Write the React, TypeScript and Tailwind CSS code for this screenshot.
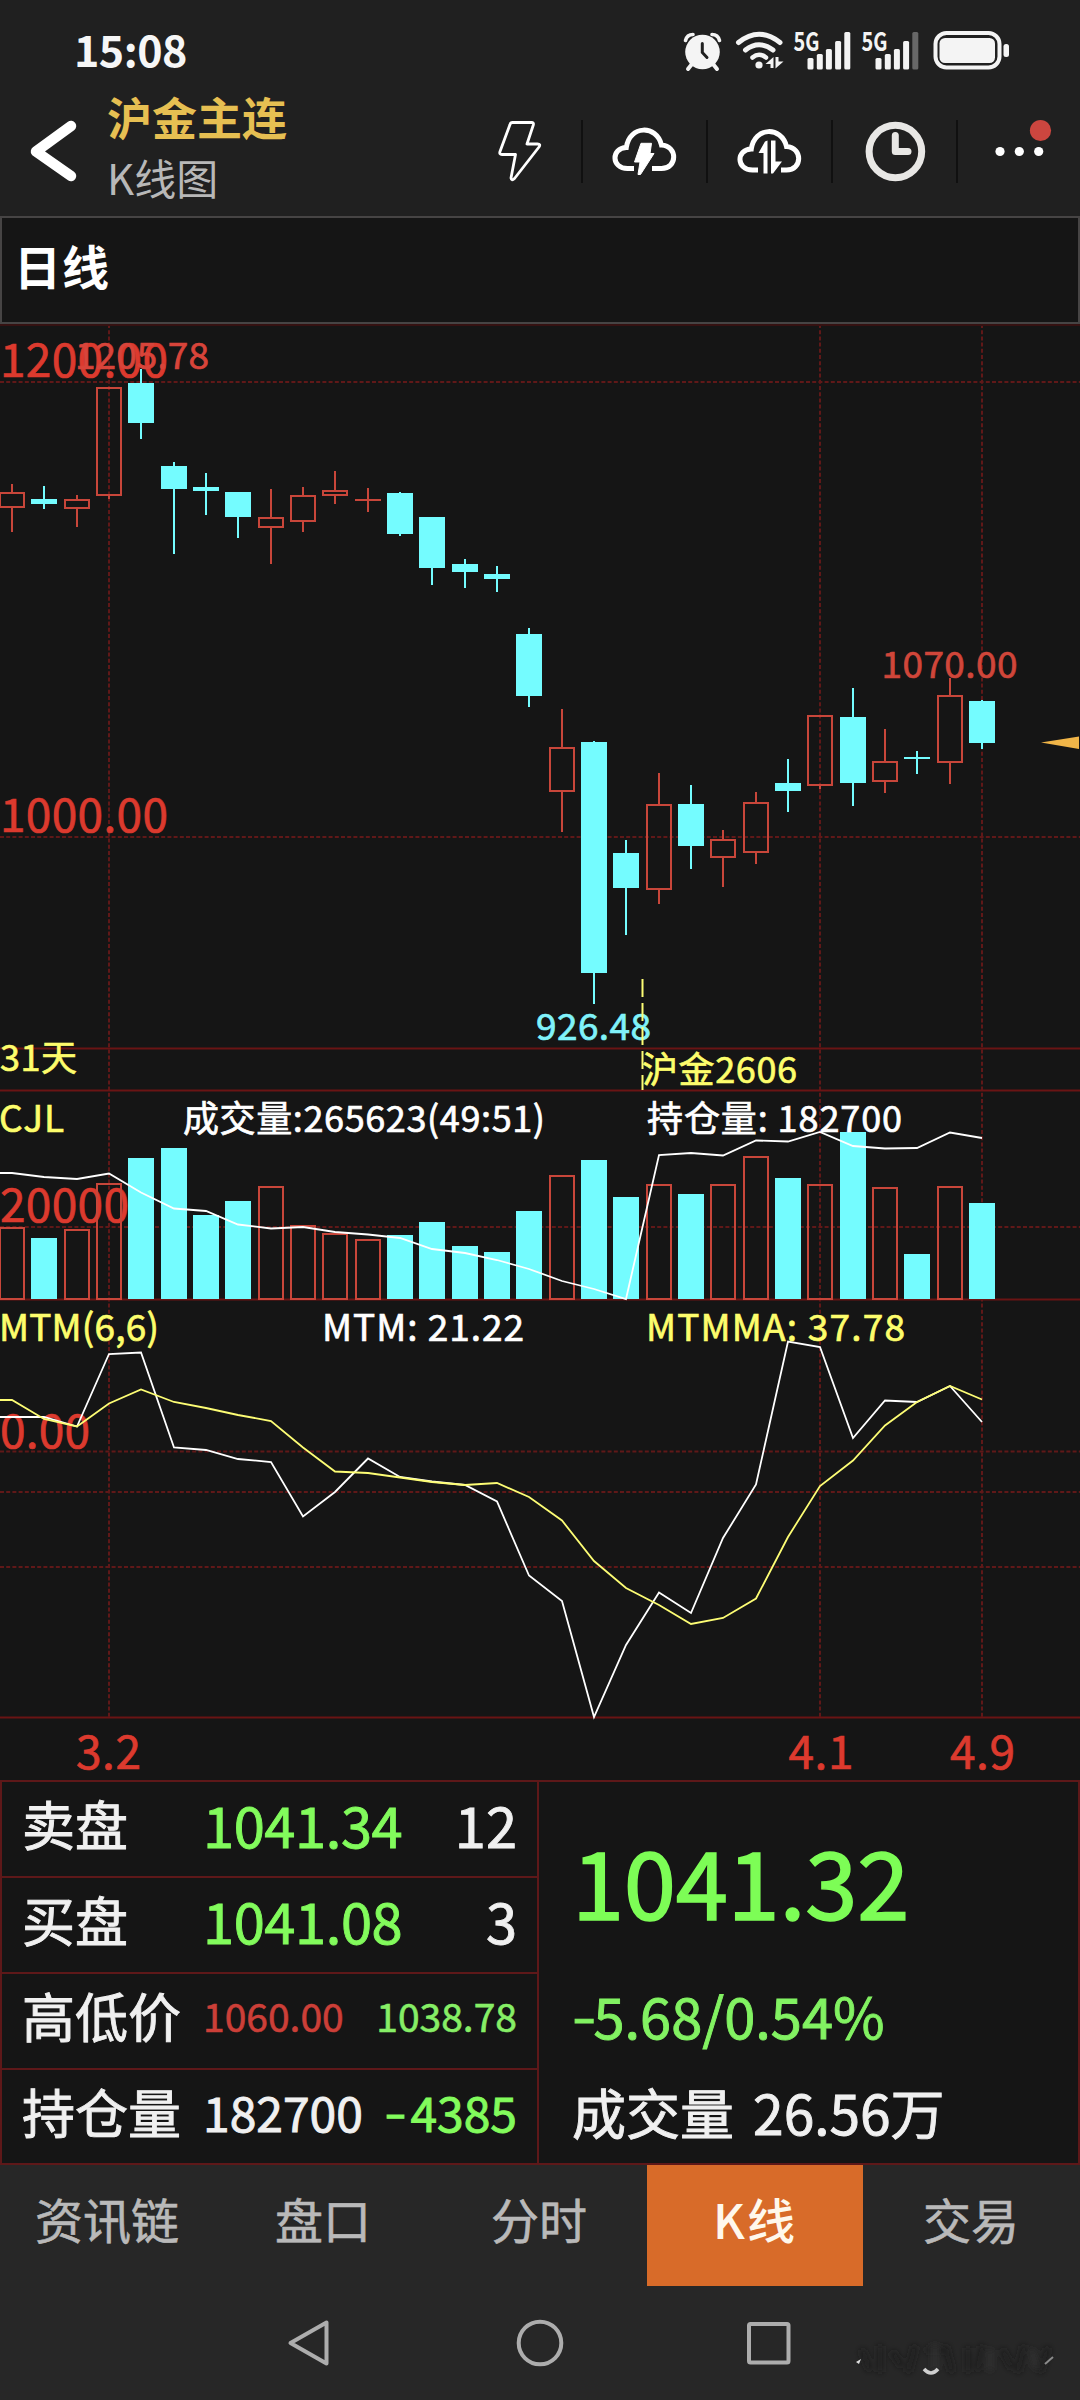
import { FunctionComponent } from "react";

const FIRST_X = 12;
const STEP = 32.33;
const VOLUME_BASE = 1300;

const RED = "#c8463a";
const CYAN = "#74fcff";
const GRID = "#601818";

// [direction, high, body top, body bottom, low, volume top]
const candles: [string, number, number, number, number, number][] = [
  ["up", 484, 492, 508, 532, 1227],
  ["down", 486, 499, 504, 509, 1238],
  ["up", 495, 499, 509, 527, 1229],
  ["up", 387, 387, 496, 499, 1183],
  ["down", 369, 383, 423, 439, 1158],
  ["down", 462, 466, 489, 554, 1148],
  ["down", 473, 487, 491, 515, 1215],
  ["down", 492, 492, 517, 538, 1201],
  ["up", 489, 517, 528, 564, 1186],
  ["up", 487, 495, 522, 532, 1225],
  ["up", 471, 490, 496, 504, 1233],
  ["up", 488, 499, 501, 512, 1239],
  ["down", 492, 493, 534, 536, 1235],
  ["down", 517, 517, 568, 585, 1222],
  ["down", 559, 564, 572, 588, 1246],
  ["down", 566, 574, 579, 592, 1252],
  ["down", 628, 634, 696, 707, 1211],
  ["up", 709, 747, 792, 832, 1175],
  ["down", 741, 742, 973, 1004, 1160],
  ["down", 840, 853, 888, 935, 1197],
  ["up", 773, 804, 890, 904, 1184],
  ["down", 785, 804, 846, 869, 1194],
  ["up", 830, 839, 858, 887, 1184],
  ["up", 792, 802, 853, 864, 1156],
  ["down", 759, 783, 791, 812, 1178],
  ["up", 715, 715, 786, 789, 1184],
  ["down", 688, 717, 783, 806, 1132],
  ["up", 729, 761, 782, 793, 1187],
  ["down", 751, 757, 759, 774, 1254],
  ["up", 678, 695, 763, 784, 1186],
  ["down", 700, 701, 743, 749, 1203],
];

const openInterest = [
  1173, 1177, 1179, 1173.5, 1192.5, 1208.5, 1211, 1224.5, 1228.5, 1227, 1232,
  1234.5, 1238, 1249, 1253, 1260, 1269, 1281, 1289, 1299, 1155, 1153, 1155.5,
  1140.5, 1141.5, 1132, 1146, 1148.5, 1148, 1132.5, 1138,
];

const mtm = [
  1417, 1417, 1426.5, 1354, 1352.5, 1447.5, 1450, 1459, 1462, 1516.5, 1492,
  1458.5, 1477, 1481.5, 1485, 1501.5, 1575.5, 1601, 1717, 1645, 1592.5, 1613,
  1538, 1484.5, 1341.5, 1347, 1438, 1400.5, 1402, 1386, 1422,
];

const mtmMa = [
  1400, 1419, 1426.5, 1403.5, 1389.5, 1402, 1408, 1415, 1421, 1447.5, 1471.5,
  1473, 1477.5, 1482, 1485, 1483, 1497, 1520.5, 1561, 1588, 1605, 1624, 1618,
  1598.5, 1537, 1486, 1460.5, 1425.5, 1402, 1386, 1399.5,
];

const centerX = (i: number) => Math.round(FIRST_X + i * STEP);

const toPoints = (values: number[]) =>
  `0,${values[0]} ` + values.map((y, i) => `${centerX(i)},${y}`).join(" ");

type LabelProps = {
  x: number;
  y: number;
  size: number;
  width: number;
  fill: string;
  text: string;
};

const Label: FunctionComponent<LabelProps> = ({ x, y, size, width, fill, text }) => (
  <text
    x={x}
    y={y}
    fontSize={size}
    textLength={width}
    fill={fill}
    stroke={fill}
    strokeWidth={0.7}
    xmlSpace="preserve"
  >
    {text}
  </text>
);

const SignalBars: FunctionComponent<{ x: number; weak?: boolean }> = ({ x, weak }) => (
  <g fill="#f4f4f4">
    <text
      x={x}
      y={51}
      fontSize={26}
      fontWeight={700}
      textLength={26}
      lengthAdjust="spacingAndGlyphs"
    >
      5G
    </text>
    <rect x={x + 14} y={58} width={6} height={11.5} rx={1.5} />
    <rect x={x + 23.3} y={54} width={6} height={15.5} rx={1.5} />
    <rect x={x + 32.4} y={49} width={6} height={20.5} rx={1.5} />
    <rect x={x + 41.6} y={41} width={6} height={28.5} rx={1.5} />
    <rect
      x={x + 50.8}
      y={32}
      width={6}
      height={37.5}
      rx={1.5}
      fill={weak ? "#686868" : "#f4f4f4"}
    />
  </g>
);

const StatusIcons: FunctionComponent = () => (
  <svg className="h-[68px] w-[340px]" viewBox="676 10 340 68">
    <g stroke="#f4f4f4" strokeLinecap="round" fill="none">
      <circle cx="702.5" cy="52" r="17.3" fill="#f4f4f4" stroke="none" />
      <path d="M685.5 40.5Q687 34.5 693 34.5M719.5 40.5Q718 34.5 712 34.5" strokeWidth="3.6" />
      <path d="M692 64L688 69M713 64L717 69" strokeWidth="4" />
      <path d="M702.3 43.5V52.5L707 57.5" stroke="#202020" strokeWidth="3" />
      <path d="M738.5 42.5Q759 26 780 42.5" strokeWidth="5" />
      <path d="M745.5 50Q759 39.5 773 50" strokeWidth="5" />
      <path d="M752.5 57.5Q759 52 766 57.5" strokeWidth="4.5" />
    </g>
    <g fill="#f4f4f4">
      <circle cx="759" cy="65" r="3.6" />
      <path d="M773.5 57V68H770.5V64H765.5ZM775.5 57H778.5V61.5H783.5L775.5 68.5Z" />
    </g>
    <SignalBars x={793.5} />
    <SignalBars x={861.5} weak />
    <rect x="935.5" y="33" width="64" height="34.5" rx="11" fill="none" stroke="#f4f4f4" strokeWidth="4" />
    <rect x="939.5" y="38" width="55.5" height="25" rx="5.5" fill="#f4f4f4" />
    <rect x="1003.5" y="44" width="5.5" height="13" rx="2.5" fill="#f4f4f4" />
  </svg>
);

const Cloud: FunctionComponent = () => (
  <path
    d="M634 168.5H627.5C611 168.5 611 148 626.3 147.5C629.5 125 656.5 124.5 661.5 145C678 146 677.5 168.5 661.5 168.5H652"
    fill="none"
    stroke="#fff"
    strokeWidth="5"
  />
);

const Toolbar: FunctionComponent = () => (
  <svg className="h-[72px] w-[600px]" viewBox="480 114 600 72">
    <path
      d="M512.5 122.5H531.5Q534 122.5 533.3 125L527 144H537.5Q541 144 539 147L514.5 178.5Q511.5 181.5 511 178L515.5 154.5H502Q499 154.5 500 151.5L510 124.5Q510.5 122.5 512.5 122.5Z"
      fill="none"
      stroke="#fff"
      strokeWidth="2.8"
      strokeLinejoin="round"
    />
    <path d="M582 120V183M707 120V183M832 120V183M957 120V183" stroke="#101010" strokeWidth="2" />
    <Cloud />
    <path
      d="M641 143.3H651.5L650 153.5H654L640.5 174.5H638L640 162H634.5Z"
      fill="#fff"
      stroke="#fff"
      strokeLinejoin="round"
    />
    <g transform="translate(125 1.5)">
      <Cloud />
      <path d="M633 158H656V174H633Z" fill="#202020" />
    </g>
    <path
      d="M767.5 140.5V173.5H763.5V153H758.5L765 141.5ZM771 140.5H775.5V161.5H782L773 173.5H771Z"
      fill="#fff"
    />
    <circle cx="895.4" cy="151.5" r="26.3" fill="none" stroke="#e8e7e5" strokeWidth="7" />
    <path
      d="M895.3 135.5V151.5H908"
      fill="none"
      stroke="#e8e7e5"
      strokeWidth="7"
      strokeLinecap="round"
      strokeLinejoin="round"
    />
    <g fill="#fff">
      <circle cx="1000" cy="151.5" r="4.6" />
      <circle cx="1019.3" cy="151.5" r="4.6" />
      <circle cx="1038.7" cy="151.5" r="4.6" />
    </g>
    <circle cx="1040.5" cy="130.5" r="10.6" fill="#cc463f" />
  </svg>
);

const Header: FunctionComponent = () => (
  <header className="flex h-[216px] flex-col">
    <div className="flex h-[84px] items-start justify-between pt-[10px] pr-16 pl-[74px]">
      <span className="pt-[11px] text-[43px] leading-[54px] font-bold tracking-[-0.5px] text-[#f6f6f6]">
        15:08
      </span>
      <StatusIcons />
    </div>
    <div className="flex justify-between">
      <div className="flex">
        <svg className="mt-8 h-[72px] w-[107px]" viewBox="0 116 107 72">
          <path
            d="M71 126L36 151.5L71 176"
            fill="none"
            stroke="#fff"
            strokeWidth="10.5"
            strokeLinecap="round"
            strokeLinejoin="round"
          />
        </svg>
        <div className="flex flex-col pt-0.5">
          <span className="text-[45px] leading-[61px] font-bold text-[#e6bf52]">沪金主连</span>
          <span className="text-[42px] leading-[60px] text-[#b8b8b8]">K线图</span>
        </div>
      </div>
      <div className="pt-[30px]">
        <Toolbar />
      </div>
    </div>
  </header>
);

const Chart: FunctionComponent = () => (
  <svg className="block h-[1456px] w-[1080px]" viewBox="0 324 1080 1456">
    <g stroke={GRID} strokeWidth="2" strokeDasharray="4 2.2">
      {[109, 820, 982].map((x) => (
        <path key={x} d={`M${x} 324V1717`} />
      ))}
      {[382, 837, 1227, 1451.5, 1492, 1567].map((y) => (
        <path key={y} d={`M0 ${y}H1080`} />
      ))}
    </g>
    <path d="M0 325H1080" stroke="#351111" strokeWidth="2" />
    <path
      d="M0 1048.5H1080M0 1090.5H1080M0 1299.5H1080M0 1717.5H1080"
      stroke="#6a1414"
      strokeWidth="2"
    />

    <Label x={0} y={377} size={46} width={168} fill="#dc3a2e" text="1200.00" />
    <Label x={0} y={832} size={46} width={168} fill="#dc3a2e" text="1000.00" />
    <Label x={0} y={1222} size={46} width={129} fill="#dc3a2e" text="20000" />
    <Label x={0} y={1447.5} size={46} width={90} fill="#dc3a2e" text="0.00" />

    <g shapeRendering="crispEdges">
      {candles.map(([dir, high, top, bottom, low, volTop], i) => {
        const x = centerX(i);
        const up = dir === "up";
        const h = bottom - top;
        return (
          <g key={i} fill={up ? RED : CYAN}>
            <rect x={x - 1} y={high} width={2} height={top - high} />
            <rect x={x - 1} y={bottom} width={2} height={low - bottom} />
            {up && h > 2 ? (
              <rect x={x - 12} y={top + 1} width={24} height={h - 2} fill="none" stroke={RED} strokeWidth={2} />
            ) : (
              <rect x={x - 13} y={top} width={26} height={h} />
            )}
            {up ? (
              <rect
                x={x - 12}
                y={volTop + 1}
                width={24}
                height={VOLUME_BASE - volTop - 2}
                fill="none"
                stroke={RED}
                strokeWidth={2}
              />
            ) : (
              <rect x={x - 13} y={volTop} width={26} height={VOLUME_BASE - volTop - 1} />
            )}
          </g>
        );
      })}
    </g>

    <g fill="none" strokeWidth="1.8">
      <polyline points={toPoints(openInterest)} stroke="#fff" />
      <polyline points={toPoints(mtm)} stroke="#fff" />
      <polyline points={toPoints(mtmMa)} stroke="#fdfd74" />
    </g>

    <path d="M1041 742.5L1079 736.5V749Z" fill="#f0b548" />

    <Label x={75} y={368.5} size={37} width={134} fill="#d8443a" text="1205.78" />
    <Label x={881.5} y={677.5} size={37} width={136} fill="#d0463a" text="1070.00" />
    <Label x={536} y={1039.5} size={37} width={115} fill="#80f2fa" text="926.48" />
    <path d="M642.5 979V1090" stroke="#fdfd74" strokeWidth="2" strokeDasharray="18 6" />
    <Label x={0} y={1071} size={36} width={77} fill="#fdfd6c" text="31天" />
    <Label x={642} y={1083} size={36} width={155} fill="#fdfd6c" text="沪金2606" />

    <Label x={-1} y={1132} size={37} width={65} fill="#fdfd6c" text="CJL" />
    <Label x={183} y={1132} size={36} width={362} fill="#fff" text="成交量:265623(49:51)" />
    <Label x={647} y={1132} size={36} width={255} fill="#fff" text="持仓量: 182700" />
    <Label x={-1} y={1341} size={37} width={160} fill="#fdfd6c" text="MTM(6,6)" />
    <Label x={322} y={1341} size={37} width={202} fill="#fff" text="MTM: 21.22" />
    <Label x={646} y={1341} size={37} width={259} fill="#fdfd6c" text="MTMMA: 37.78" />

    <Label x={76} y={1769} size={46} width={65} fill="#dc3a2e" text="3.2" />
    <Label x={788.5} y={1769} size={46} width={65} fill="#dc3a2e" text="4.1" />
    <Label x={950} y={1769} size={46} width={65} fill="#dc3a2e" text="4.9" />
  </svg>
);

const QuoteTable: FunctionComponent = () => (
  <div className="flex h-[385px] border-2 border-[#5e1819] text-[#f0f0f0] [-webkit-text-stroke:0.9px]">
    <div className="flex w-[537px] flex-col border-r-2 border-[#5e1819]">
      <div className="flex h-24 items-center border-b-2 border-[#5e1819] pr-5 pb-[11px] pl-5">
        <span className="w-[181px] text-[53px] leading-none">卖盘</span>
        <span className="flex-1 text-[56px] leading-none tracking-[-0.4px] text-[#82fb5c]">1041.34</span>
        <span className="text-[56px] leading-none">12</span>
      </div>
      <div className="flex h-24 items-center border-b-2 border-[#5e1819] pr-5 pb-[11px] pl-5">
        <span className="w-[181px] text-[53px] leading-none">买盘</span>
        <span className="flex-1 text-[56px] leading-none tracking-[-0.4px] text-[#82fb5c]">1041.08</span>
        <span className="text-[56px] leading-none">3</span>
      </div>
      <div className="flex h-24 items-center border-b-2 border-[#5e1819] pr-5 pb-[11px] pl-5">
        <span className="w-[181px] text-[53px] leading-none">高低价</span>
        <span className="flex-1 text-[39px] leading-none text-[#cc3f38] [-webkit-text-stroke:0.6px]">
          1060.00
        </span>
        <span className="text-[39px] leading-none text-[#86ee66] [-webkit-text-stroke:0.6px]">1038.78</span>
      </div>
      <div className="flex flex-1 items-center pr-5 pb-[11px] pl-5">
        <span className="w-[181px] text-[53px] leading-none">持仓量</span>
        <span className="flex-1 text-[48px] leading-none">182700</span>
        <span className="text-[48px] leading-none text-[#82fb5c]">
          <span className="mr-1 inline-block origin-right -translate-y-0.5 scale-x-135">-</span>4385
        </span>
      </div>
    </div>
    <div className="flex flex-1 flex-col pl-[33px]">
      <span className="pt-[50px] text-[94px] leading-[94px] tracking-[-0.3px] text-[#7dfd56] [-webkit-text-stroke:1.6px]">
        1041.32
      </span>
      <span className="pt-[61px] text-[56px] leading-[56px] text-[#82f262]">
        <span className="mr-0.5 inline-block origin-left -translate-y-0.5 scale-x-125">-</span>5.68/0.54%
      </span>
      <span className="pt-[41px] text-[54px] leading-[54px] whitespace-pre">
        成交量 <span className="ml-[7px] text-[55px]">26.56</span>万
      </span>
    </div>
  </div>
);

const tabs = ["资讯链", "盘口", "分时", "K线", "交易"];

const BottomTabs: FunctionComponent = () => (
  <nav className="grid h-[121px] grid-cols-5">
    {tabs.map((tab) => (
      <div
        key={tab}
        className={
          tab === "K线"
            ? "-ml-px mr-px bg-[#d86b29] pt-[29px] text-center text-[48px] leading-[48px] font-medium tracking-[2px] text-[#fff8ec]"
            : "pt-[29px] pr-0.5 text-center text-[48px] leading-[48px] text-[#b9b9b9] [-webkit-text-stroke:0.6px]"
        }
      >
        {tab}
      </div>
    ))}
  </nav>
);

const SystemNav: FunctionComponent = () => (
  <svg className="block h-[114px] w-[1080px]" viewBox="0 2286 1080 114">
    <g fill="none" stroke="#adadad" strokeWidth="4" strokeLinejoin="round">
      <path d="M290.5 2343L326.5 2322.5V2363.5Z" />
      <circle cx="540" cy="2343" r="21.3" />
      <rect x="749" y="2324" width="39.5" height="38.5" rx="1.5" />
    </g>
    <defs>
      <filter id="smudge" x="-10%" y="-50%" width="120%" height="200%">
        <feGaussianBlur stdDeviation="3" />
      </filter>
    </defs>
    <g filter="url(#smudge)" stroke="#1e1e1e" strokeWidth="5" fill="none">
      <path d="M862 2350L870 2370M880 2346V2372M892 2352L902 2366M915 2346L908 2372M926 2350H948M945 2346L952 2372M968 2348V2372M982 2346L978 2370M1002 2350L1012 2368M1024 2346L1018 2372M1048 2348L1040 2372" />
      <path d="M935 2345V2370M990 2350V2370M1032 2350L1036 2368" stroke="#343434" strokeWidth="4" />
    </g>
    <path d="M856 2362L861 2359L859 2364Z" fill="#e0e0e0" />
    <path d="M924 2369Q931 2377 938 2369" fill="none" stroke="#cfcfcf" strokeWidth="3.5" />
    <path d="M1045 2364L1053 2357" stroke="#8b8b8b" strokeWidth="2" />
  </svg>
);

const App: FunctionComponent = () => {
  return (
    <div className="flex h-[2400px] w-[1080px] flex-col overflow-hidden bg-[#202020] font-['Noto_Sans_CJK_SC',sans-serif]">
      <Header />
      <div className="flex h-[108px] items-center border-2 border-[#464444] bg-[#151515] pb-[11px] pl-3 text-[47px] leading-none font-bold tracking-[1px] text-white">
        日线
      </div>
      <div className="flex flex-col bg-[#151515]">
        <Chart />
        <QuoteTable />
      </div>
      <div className="flex flex-col bg-[#272727]">
        <BottomTabs />
        <SystemNav />
      </div>
    </div>
  );
};

export default App;
